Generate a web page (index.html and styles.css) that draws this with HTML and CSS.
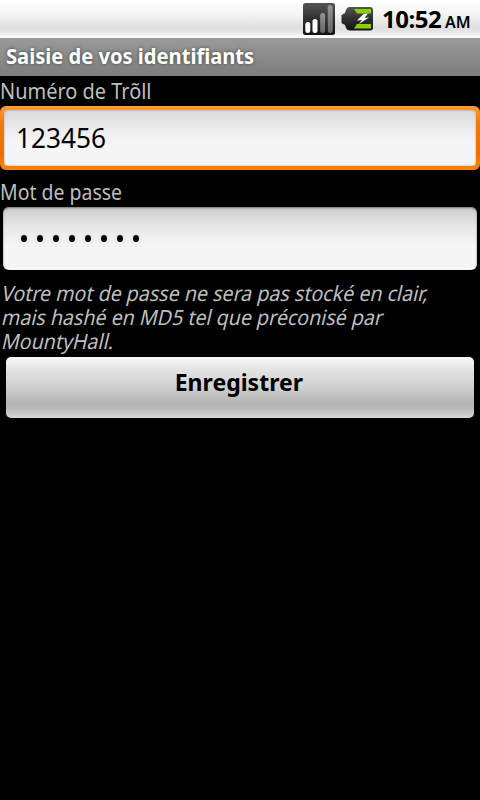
FILE: index.html
```html
<!DOCTYPE html>
<html lang="fr">
<head>
<meta charset="utf-8">
<title>Saisie de vos identifiants</title>
<link rel="stylesheet" href="styles.css">
</head>
<body>
<header class="status">
  <svg class="signal" width="32" height="32" viewBox="0 0 32 32">
    <defs>
      <linearGradient id="dark" x1="0" y1="0" x2="0" y2="1"><stop offset="0" stop-color="#555"/><stop offset=".5" stop-color="#303030"/><stop offset="1" stop-color="#111"/></linearGradient>
      <linearGradient id="dim" x1="0" y1="0" x2="0" y2="1"><stop offset="0" stop-color="#959595"/><stop offset="1" stop-color="#666"/></linearGradient>
    </defs>
    <rect width="32" height="32" rx="2.5" fill="url(#dark)"/>
    <rect x="2.300" y="19" width="5" height="11" rx="2.500" fill="#fff"/>
    <rect x="9.500" y="16" width="5" height="14" rx="2.500" fill="#fff"/>
    <rect x="17.200" y="10" width="5" height="20" rx="2.500" fill="url(#dim)"/>
    <rect x="24.700" y="2" width="5" height="28" rx="2.500" fill="url(#dim)"/>
  </svg>
  <svg class="battery" width="33" height="24" viewBox="0 0 33 24">
    <path d="M8 0H29Q32 0 32 3V20.500Q32 23.500 29 23.500H9Q6 23.500 5 21L4 18L.5 16V8L4 6L5 3Q6 0 8 0Z" fill="url(#dark)"/>
    <path d="M13 2H30V6.500H16ZM13 21.500H30V17H16Z" fill="#8fce00"/>
    <path d="M22.500 7L27 6.500L23.500 11L28 10.500L18 17L21 13L16 13.500Z" fill="#fff"/>
  </svg>
  <time class="clock"><span class="hour">10:52</span><span class="ampm">AM</span></time>
</header>
<h1 class="title"><span class="fit fit-title">Saisie de vos identifiants</span></h1>
<main class="form">
  <label class="label"><span class="fit fit-troll">Numéro de Trõll</span></label>
  <div class="field focused"><span class="fit fit-number">123456</span></div>
  <label class="label label-pass"><span class="fit fit-pass">Mot de passe</span></label>
  <div class="field password"><i></i><i></i><i></i><i></i><i></i><i></i><i></i><i></i></div>
  <p class="note"><span class="line">Votre mot de passe ne sera pas stocké en clair,</span><span class="line">mais hashé en MD5 tel que préconisé par</span><span class="line">MountyHall.</span></p>
  <button class="save"><span class="fit-save">Enregistrer</span></button>
</main>
</body>
</html>
```
FILE: styles.css
```css
* { box-sizing: border-box; }
body {
  margin: 0;
  width: 480px;
  height: 800px;
  overflow: hidden;
  background: #000;
  color: #bebebe;
  font-family: "Noto Sans", "Open Sans", sans-serif;
  font-size: 21px;
}
.status {
  display: flex;
  align-items: flex-start;
  height: 38px;
  padding-left: 303px;
  background: linear-gradient(#fff, #f5f5f5 35%, #dedede 75%, #e8e8e8 85%, #fff);
  color: #000;
}
.signal { flex: none; margin-top: 3px; }
.battery { flex: none; margin: 7px 0 0 6px; }
.clock { display: flex; align-items: baseline; margin-left: 8px; line-height: 38px; font-weight: 700; white-space: nowrap; }
.hour { width: 63px; font-size: 24px; letter-spacing: -.5px; }
.ampm { font-size: 16px; font-weight: 600; }
.title {
  margin: 0;
  height: 38px;
  padding-left: 6px;
  background: linear-gradient(#9a9a9a, #7d7d7d);
  color: #fff;
  font-size: 21px;
  line-height: 37px;
  text-shadow: 0 0 4px #384838;
}
.fit { display: inline-block; transform-origin: 0 50%; white-space: nowrap; }
.fit-title { transform: scaleX(.958); }
.fit-troll { transform: scaleX(.95); }
.fit-pass { transform: scaleX(.927); }
.fit-number { margin: 0 0 2px 12px; transform: scaleX(.972); }
.label { display: block; height: 30px; line-height: 30px; }
.label-pass { height: 37px; padding-top: 7px; }
.field { display: flex; align-items: center; }
.focused {
  height: 64px;
  padding: 4px;
  border-radius: 6px;
  background: linear-gradient(#ff9a38, #f27800 30%, #f06e00 75%, #ff8208);
  color: #000;
  font-size: 27px;
  position: relative;
  z-index: 0;
}
.focused::before {
  content: "";
  position: absolute;
  z-index: -1;
  inset: 4px;
  border-radius: 4px;
  background: linear-gradient(#d8d8d8, #ededed 35%, #f5f5f5 60%, #f5f5f5);
  box-shadow: inset 0 0 2px #999;
}
.password {
  height: 63px;
  margin: 0 3px;
  padding-left: 18px;
  gap: 10px;
  border-radius: 6px;
  background: linear-gradient(#ccc, #e5e5e5 30%, #f5f5f5 60%, #f5f5f5 95%, #fff);
  box-shadow: inset 0 1px 2px #777;
}
.password i { width: 6px; height: 7px; border-radius: 50%; background: #000; }
.note { margin: 11px 0 0 1px; }
.line { display: block; width: max-content; height: 24px; line-height: 24px; white-space: nowrap; transform-origin: 0 80%; transform: scaleX(.934) skewX(-14deg); font-style: normal; }
.save {
  display: block;
  width: 468px;
  height: 61px;
  margin: 4px 6px 0;
  padding: 0 0 11px;
  border: 0;
  border-radius: 5px;
  background: linear-gradient(#fafafa, #e4e4e4 20%, #cfcfcf 50%, #b5b5b5 75%, #b7b7b7 83%, #d5d5d5);
  color: #000;
  font: 700 24px/50px "Noto Sans", "Open Sans", sans-serif;
}
.fit-save { display: inline-block; transform: translateX(-1px) scaleX(.96); }
```
